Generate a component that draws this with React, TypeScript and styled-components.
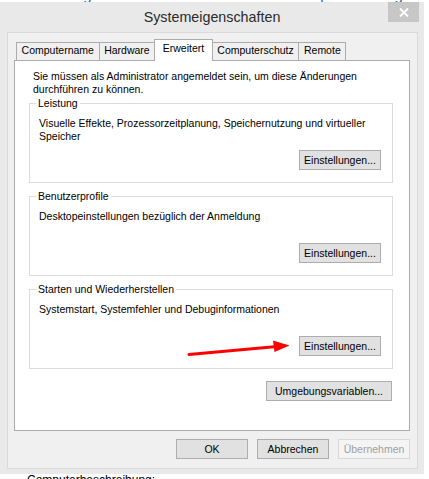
import React from 'react';
import styled, { createGlobalStyle } from 'styled-components';

const uiFont = `'Liberation Sans', Arial, sans-serif`;

const GlobalStyle = createGlobalStyle`
  html, body {
    margin: 0;
    padding: 0;
    background: #fff;
  }
  body {
    font-family: ${uiFont};
    -webkit-font-smoothing: antialiased;
  }
`;

const Page = styled.div`
  position: relative;
  width: 429px;
  height: 479px;
  overflow: hidden;
  background: #fff;
`;

const Peek = styled.div<{ $height: number; $shift: number; $color: string; $size: number; $indent: number }>`
  height: ${(p) => p.$height}px;
  overflow: hidden;
  white-space: nowrap;

  span {
    display: block;
    margin-top: ${(p) => p.$shift}px;
    padding-left: ${(p) => p.$indent}px;
    font-size: ${(p) => p.$size}px;
    line-height: 15px;
    color: ${(p) => p.$color};
  }
`;

const Window = styled.div`
  width: 424px;
  height: 472px;
  box-sizing: border-box;
  background: #e9e9e9;
  padding-bottom: 5px;
  display: flex;
  flex-direction: column;
`;

const TitleBar = styled.div`
  height: 30px;
  flex: none;
  display: grid;
  grid-template-columns: 1fr auto 1fr;
`;

const Title = styled.div`
  grid-column: 2;
  font-size: 14.3px;
  line-height: 30px;
  color: #2b2b2b;
  white-space: nowrap;
`;

const CloseButton = styled.div`
  grid-column: 3;
  justify-self: end;
  align-self: start;
  margin-right: 5px;
  width: 31px;
  height: 20px;
  background: #c7c7c7;
  display: grid;
  place-items: center;
`;

const Client = styled.div`
  flex: 1;
  margin: 0 6px 0 7px;
  box-sizing: border-box;
  background: #f0f0f0;
  border: 1px solid #dadada;
  padding: 6px 7px 0 6px;
  display: flex;
  flex-direction: column;
`;

const TabStrip = styled.div`
  display: flex;
  align-items: flex-end;
  padding-left: 2px;
  position: relative;
  z-index: 1;
`;

const Tab = styled.div<{ $active?: boolean }>`
  box-sizing: border-box;
  height: ${(p) => (p.$active ? 22 : 18)}px;
  margin-bottom: ${(p) => (p.$active ? -1 : 0)}px;
  padding: 0 ${(p) => (p.$active ? 7.5 : 4.6)}px;
  line-height: ${(p) => (p.$active ? 17 : 15)}px;
  border: 1px solid #acacac;
  border-bottom: none;
  background: ${(p) => (p.$active ? '#fff' : '#f0f0f0')};
  font-size: 10.5px;
  color: #000;
  white-space: nowrap;
  position: relative;
  z-index: ${(p) => (p.$active ? 2 : 1)};

  & + & {
    margin-left: -1px;
  }
`;

const Panel = styled.div`
  height: 371px;
  box-sizing: border-box;
  background: #fff;
  border: 1px solid #acacac;
  padding: 9px 16px 0 14px;
  display: flex;
  flex-direction: column;
`;

const Text = styled.p`
  margin: 0;
  font-size: 10.5px;
  line-height: 13px;
  color: #000;
`;

const Intro = styled(Text)`
  padding-left: 4px;
`;

const Group = styled.fieldset`
  margin: 1px 0 0;
  & + & {
    margin-top: 7px;
  }
  min-width: 0;
  padding: 0 11px 12px 8px;
  border: 1px solid #dcdcdc;
  display: flex;
  flex-direction: column;
`;

const Legend = styled.legend`
  padding: 0 2px;
  margin-left: -2px;
  font-size: 10.5px;
  line-height: 13px;
  color: #000;
`;

const Description = styled(Text)`
  margin-top: 7px;
  padding-left: 1px;
  min-height: 26px;
`;

const ButtonRow = styled.div<{ $top: number; $right?: number; $gap?: number }>`
  display: flex;
  justify-content: flex-end;
  gap: ${(p) => p.$gap ?? 0}px;
  margin-top: ${(p) => p.$top}px;
  padding-right: ${(p) => p.$right ?? 0}px;
`;

const Button = styled.button<{ $width: number }>`
  width: ${(p) => p.$width}px;
  height: 20px;
  box-sizing: border-box;
  padding: 0;
  border: 1px solid #adadad;
  background: #e1e1e1;
  font-family: ${uiFont};
  font-size: 10.5px;
  color: #000;

  &:disabled {
    background: #f4f4f4;
    border-color: #d9d9d9;
    color: #a0a0a0;
  }
`;

const Arrow = styled.svg`
  position: absolute;
  left: 0;
  top: 0;
  pointer-events: none;
`;

const tabs = ['Computername', 'Hardware', 'Erweitert', 'Computerschutz', 'Remote'];

const groups = [
  {
    title: 'Leistung',
    text: 'Visuelle Effekte, Prozessorzeitplanung, Speichernutzung und virtueller Speicher',
  },
  { title: 'Benutzerprofile', text: 'Desktopeinstellungen bezüglich der Anmeldung' },
  { title: 'Starten und Wiederherstellen', text: 'Systemstart, Systemfehler und Debuginformationen' },
];

export default function App() {
  return (
    <>
      <GlobalStyle />
      <Page>
        <Peek $height={2} $shift={-13} $color='#1464b4' $size={15} $indent={30}>
          <span>Grundlegende Informationen über den Computer anzeigen</span>
        </Peek>
        <Window>
          <TitleBar>
            <Title>Systemeigenschaften</Title>
            <CloseButton>
              <svg width='10' height='9' viewBox='0 0 10 9'>
                <path d='M1 0.5 L9 8.5 M9 0.5 L1 8.5' stroke='#fff' strokeWidth='1.8' />
              </svg>
            </CloseButton>
          </TitleBar>
          <Client>
            <TabStrip>
              {tabs.map((t) => (
                <Tab key={t} $active={t === 'Erweitert'}>
                  {t}
                </Tab>
              ))}
            </TabStrip>
            <Panel>
              <Intro>
                Sie müssen als Administrator angemeldet sein, um diese Änderungen durchführen zu
                können.
              </Intro>
              {groups.map((g) => (
                <Group key={g.title}>
                  <Legend>{g.title}</Legend>
                  <Description>{g.text}</Description>
                  <ButtonRow $top={7}>
                    <Button $width={82}>Einstellungen...</Button>
                  </ButtonRow>
                </Group>
              ))}
              <ButtonRow $top={12} $right={1}>
                <Button $width={126}>Umgebungsvariablen...</Button>
              </ButtonRow>
            </Panel>
            <ButtonRow $top={8} $gap={9}>
              <Button $width={72}>OK</Button>
              <Button $width={72}>Abbrechen</Button>
              <Button $width={72} disabled>
                Übernehmen
              </Button>
            </ButtonRow>
          </Client>
        </Window>
        <Peek $height={5} $shift={-1} $color='#000' $size={12} $indent={27}>
          <span>Computerbeschreibung:</span>
        </Peek>
        <Arrow width='429' height='479' viewBox='0 0 429 479'>
          <path d='M189 354.5 L277 346.5' stroke='#ff0000' strokeWidth='3' strokeLinecap='round' />
          <polygon points='289.5,345.5 273,340.5 274.5,352' fill='#ff0000' />
        </Arrow>
      </Page>
    </>
  );
}
